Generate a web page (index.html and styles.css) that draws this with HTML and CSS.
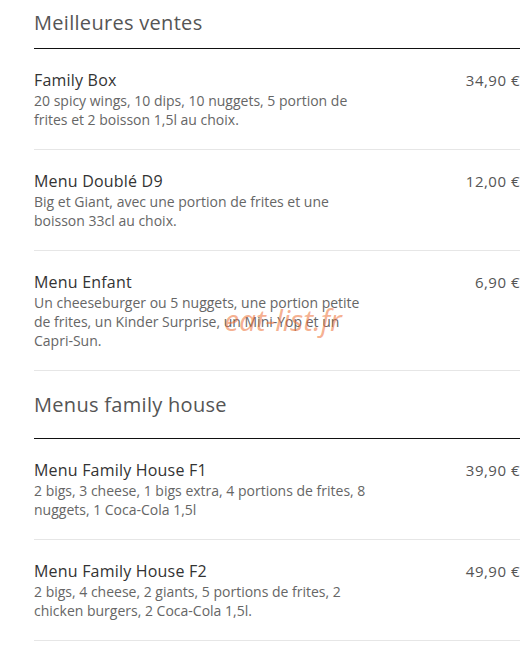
FILE: index.html
```html
<!DOCTYPE html>
<html lang="fr">
<head>
    <meta charset="UTF-8">
    <meta name="viewport" content="width=device-width, initial-scale=1.0">
    <title>Menu</title>
    <link rel="stylesheet" href="styles.css">
</head>
<body>
    <div class="menu">
        <section class="section first">
            <h2 class="section-title">Meilleures ventes</h2>
            <div class="item">
                <div class="item-text">
                    <h3 class="item-name">Family Box</h3>
                    <p class="item-desc">20 spicy wings, 10 dips, 10 nuggets, 5 portion de frites et 2 boisson 1,5l au choix.</p>
                </div>
                <span class="item-price">34,90 €</span>
            </div>
            <div class="item">
                <div class="item-text">
                    <h3 class="item-name">Menu Doublé D9</h3>
                    <p class="item-desc">Big et Giant, avec une portion de frites et une boisson 33cl au choix.</p>
                </div>
                <span class="item-price">12,00 €</span>
            </div>
            <div class="item">
                <div class="item-text">
                    <h3 class="item-name">Menu Enfant</h3>
                    <p class="item-desc">Un cheeseburger ou 5 nuggets, une portion petite de frites, un Kinder Surprise, un Mini-Yop et un Capri-Sun.</p>
                </div>
                <span class="item-price">6,90 €</span>
                <span class="watermark">eat-list.fr</span>
            </div>
        </section>

        <section class="section">
            <h2 class="section-title">Menus family house</h2>
            <div class="item">
                <div class="item-text">
                    <h3 class="item-name">Menu Family House F1</h3>
                    <p class="item-desc">2 bigs, 3 cheese, 1 bigs extra, 4 portions de frites, 8 nuggets, 1 Coca-Cola 1,5l</p>
                </div>
                <span class="item-price">39,90 €</span>
            </div>
            <div class="item">
                <div class="item-text">
                    <h3 class="item-name">Menu Family House F2</h3>
                    <p class="item-desc">2 bigs, 4 cheese, 2 giants, 5 portions de frites, 2 chicken burgers, 2 Coca-Cola 1,5l.</p>
                </div>
                <span class="item-price">49,90 €</span>
            </div>
        </section>
    </div>
</body>
</html>
```

FILE: styles.css
```css
body {
    font-family: "Open Sans", "Noto Sans", sans-serif;
    background-color: #fff;
    color: #333;
    margin: 0;
    padding: 0;
}
.menu {
    padding: 0 6px 0 34px;
}
.section-title {
    margin: 20px 0 0;
    padding-bottom: 20px;
    font-size: 20px;
    font-weight: 400;
    letter-spacing: 0.3px;
    color: #555;
    border-bottom: 1px solid #111;
}
.first .section-title {
    margin-top: 9px;
    padding-bottom: 12px;
}
.item {
    position: relative;
    display: flex;
    justify-content: space-between;
    align-items: flex-start;
    padding: 20px 0;
    border-bottom: 1px solid #e6e6e6;
}
.item-name {
    margin: 0;
    font-size: 16px;
    font-weight: 400;
    line-height: 22px;
    letter-spacing: 0.2px;
    color: #333;
}
.item-desc {
    margin: 0;
    width: 338px;
    font-size: 14px;
    line-height: 19px;
    color: #666;
}
.item-price {
    font-size: 15px;
    line-height: 22px;
    letter-spacing: 0.5px;
    color: #555;
}
.watermark {
    position: absolute;
    left: 190px;
    top: 48px;
    font-size: 30px;
    font-style: italic;
    color: rgba(238, 110, 50, 0.55);
}
```
